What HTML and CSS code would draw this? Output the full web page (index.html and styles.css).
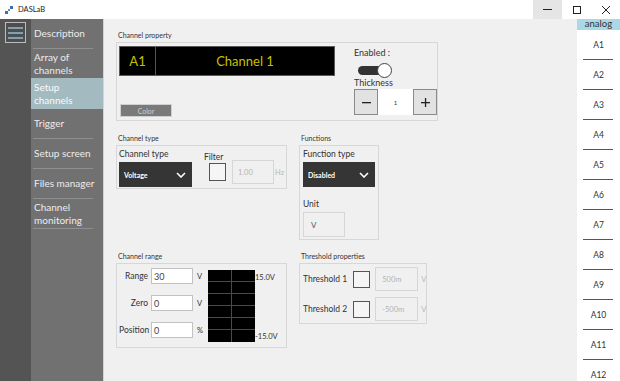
FILE: index.html
```html
<!DOCTYPE html>
<html>
<head>
<meta charset="utf-8">
<title>DASLaB</title>
<link rel="stylesheet" href="styles.css">
</head>
<body>
<div class="window">
  <header class="titlebar">
    <svg class="app-icon" width="8" height="8" viewBox="0 0 8 8">
      <rect x="0" y="5" width="3" height="3" fill="#3a6fb0"/>
      <rect x="3" y="3" width="2" height="2" fill="#7a8a9a"/>
      <rect x="5" y="0" width="3" height="3" fill="#3a6fb0"/>
    </svg>
    <span class="title">DASLaB</span>
    <div class="controls">
      <div class="ctl ctl-hover"><svg width="9" height="1"><rect width="9" height="1" fill="#222"/></svg></div>
      <div class="ctl"><svg width="8" height="8"><rect x=".5" y=".5" width="7" height="7" fill="none" stroke="#222"/></svg></div>
      <div class="ctl"><svg width="8" height="8"><path d="M0 0L8 8M8 0L0 8" stroke="#222" stroke-width="1"/></svg></div>
    </div>
  </header>

  <div class="body">
    <div class="rail">
      <div class="hamburger"><span></span><span></span><span></span></div>
    </div>

    <nav class="nav">
      <div class="nav-item">Description</div>
      <div class="sep"></div>
      <div class="nav-item">Array of<br>channels</div>
      <div class="nav-item active">Setup<br>channels</div>
      <div class="nav-item">Trigger</div>
      <div class="sep"></div>
      <div class="nav-item">Setup screen</div>
      <div class="sep"></div>
      <div class="nav-item">Files manager</div>
      <div class="sep"></div>
      <div class="nav-item">Channel<br>monitoring</div>
      <div class="sep"></div>
    </nav>

    <main class="main">
      <section class="group">
        <div class="group-label">Channel property</div>
        <div class="box box-prop">
          <div class="prop-left">
            <div class="display">
              <div class="disp-id">A1</div>
              <div class="disp-name">Channel 1</div>
            </div>
            <div class="color-btn">Color</div>
          </div>
          <div class="prop-right">
            <div class="lbl-enabled">Enabled :</div>
            <div class="toggle"><div class="knob"></div></div>
            <div class="lbl-thick">Thickness</div>
            <div class="stepper">
              <div class="step-btn">
                <svg width="9" height="9"><rect x="0" y="4" width="9" height="1.3" fill="#222"/></svg>
              </div>
              <div class="step-val">1</div>
              <div class="step-btn">
                <svg width="9" height="9"><rect x="0" y="4" width="9" height="1.3" fill="#222"/><rect x="3.9" y="0" width="1.3" height="9" fill="#222"/></svg>
              </div>
            </div>
          </div>
        </div>
      </section>

      <div class="row row2">
        <section class="group">
          <div class="group-label">Channel type</div>
          <div class="box box-type">
            <div class="col">
              <div class="field-lbl">Channel type</div>
              <div class="select">
                <span>Voltage</span>
                <svg width="10" height="6" viewBox="0 0 10 6"><path d="M1 1L5 5L9 1" fill="none" stroke="#fff" stroke-width="1.6"/></svg>
              </div>
            </div>
            <div class="col filter-col">
              <div class="field-lbl filter-lbl">Filter</div>
              <div class="filter-row">
                <div class="check"></div>
                <div class="input disabled filter-in">1.00</div>
                <span class="unit-dim">Hz</span>
              </div>
            </div>
          </div>
        </section>

        <section class="group">
          <div class="group-label">Functions</div>
          <div class="box box-func">
            <div class="field-lbl">Function type</div>
            <div class="select select-func">
              <span>Disabled</span>
              <svg width="10" height="6" viewBox="0 0 10 6"><path d="M1 1L5 5L9 1" fill="none" stroke="#fff" stroke-width="1.6"/></svg>
            </div>
            <div class="field-lbl unit-lbl">Unit</div>
            <div class="input disabled unit-in">V</div>
          </div>
        </section>
      </div>

      <div class="row row3">
        <section class="group">
          <div class="group-label">Channel range</div>
          <div class="box box-range">
            <div class="range-form">
              <span class="r-lbl">Range</span><div class="input r-in">30</div><span class="r-unit">V</span>
              <span class="r-lbl">Zero</span><div class="input r-in">0</div><span class="r-unit">V</span>
              <span class="r-lbl">Position</span><div class="input r-in">0</div><span class="r-unit">%</span>
            </div>
            <div class="chart">
              <div class="cell"></div><div class="cell"></div>
              <div class="cell"></div><div class="cell"></div>
              <div class="cell"></div><div class="cell"></div>
              <div class="cell"></div><div class="cell"></div>
              <div class="cell"></div><div class="cell"></div>
              <div class="cell"></div><div class="cell"></div>
            </div>
            <div class="chart-scale">
              <span>15.0V</span>
              <span>-15.0V</span>
            </div>
          </div>
        </section>

        <section class="group">
          <div class="group-label">Threshold properties</div>
          <div class="box box-thr">
            <div class="thr-row">
              <span class="thr-lbl">Threshold 1</span>
              <div class="check"></div>
              <div class="input disabled thr-in">500m</div>
              <span class="unit-dim">V</span>
            </div>
            <div class="thr-row">
              <span class="thr-lbl">Threshold 2</span>
              <div class="check"></div>
              <div class="input disabled thr-in">-500m</div>
              <span class="unit-dim">V</span>
            </div>
          </div>
        </section>
      </div>
    </main>

    <aside class="list">
      <div class="list-head">analog</div>
      <div class="list-item">A1</div><div class="list-sep"></div>
      <div class="list-item">A2</div><div class="list-sep"></div>
      <div class="list-item">A3</div><div class="list-sep"></div>
      <div class="list-item">A4</div><div class="list-sep"></div>
      <div class="list-item">A5</div><div class="list-sep"></div>
      <div class="list-item">A6</div><div class="list-sep"></div>
      <div class="list-item">A7</div><div class="list-sep"></div>
      <div class="list-item">A8</div><div class="list-sep"></div>
      <div class="list-item">A9</div><div class="list-sep"></div>
      <div class="list-item">A10</div><div class="list-sep"></div>
      <div class="list-item">A11</div><div class="list-sep"></div>
      <div class="list-item">A12</div><div class="list-sep"></div>
    </aside>
  </div>
</div>
</body>
</html>
```

FILE: styles.css
```css
* { box-sizing: border-box; }

body {
  margin: 0;
  width: 620px;
  height: 381px;
  overflow: hidden;
  font-family: Lato, "Open Sans", sans-serif;
  color: #333;
}

.window {
  display: flex;
  flex-direction: column;
  height: 381px;
}

/* title bar */
.titlebar {
  height: 19px;
  flex: none;
  background: #fff;
  display: flex;
  align-items: center;
}
.app-icon { margin-left: 5px; }
.title {
  margin-left: 5px;
  font-size: 7.5px;
  color: #222;
}
.controls {
  margin-left: auto;
  display: flex;
  height: 19px;
}
.ctl {
  width: 29px;
  display: flex;
  align-items: center;
  justify-content: center;
}
.ctl-hover { background: #e5e5e5; }

/* body */
.body {
  flex: 1;
  display: flex;
  min-height: 0;
}

.rail {
  width: 31px;
  flex: none;
  background: #545454;
}
.hamburger {
  margin: 3px 0 0 5px;
  width: 21px;
  height: 21px;
  border: 1px solid #bcbcbc;
  background: #4e4e4e;
  display: flex;
  flex-direction: column;
  justify-content: center;
  gap: 3px;
  padding: 0 2px;
}
.hamburger span {
  height: 2px;
  background: #7fa2b3;
}

.nav {
  width: 73px;
  flex: none;
  background: #717171;
  border-right: 1px solid #d4d4d4;
}
.nav-item {
  height: 29px;
  display: flex;
  align-items: center;
  padding-left: 3px;
  font-size: 10px;
  line-height: 13px;
  color: #ececec;
  white-space: nowrap;
}
.nav-item.active {
  height: 31px;
  background: #a3bbc0;
  color: #fafafa;
}
.sep {
  height: 1px;
  margin: 0 10px 0 2px;
  background: #8f8f8f;
}

/* main */
.main {
  flex: 1;
  background: #f0f0f0;
  padding: 12px 0 0 12px;
}
.group-label {
  font-size: 7px;
  line-height: 9px;
  margin: 0 0 2px 2px;
  color: #333;
  white-space: nowrap;
}
.box {
  border: 1px solid #d7d7d7;
}
.row {
  display: flex;
  align-items: flex-start;
  gap: 12px;
}
.row2 { margin-top: 13px; }
.row3 { margin-top: 12px; }

/* channel property */
.box-prop {
  width: 322px;
  height: 79px;
  display: flex;
  padding: 3px 0 0 2px;
}
.prop-left {
  width: 216px;
  display: flex;
  flex-direction: column;
}
.display {
  height: 30px;
  display: flex;
  background: #000;
  border: 1px solid #5a5a5a;
  color: #c8c000;
  font-size: 13px;
}
.disp-id {
  width: 36px;
  border-right: 1px solid #555;
  display: flex;
  align-items: center;
  justify-content: center;
}
.disp-name {
  flex: 1;
  display: flex;
  align-items: center;
  justify-content: center;
}
.color-btn {
  margin: 28px 0 0 1px;
  width: 52px;
  height: 13px;
  background: #7a7a7a;
  border: 1px solid #d0d0d0;
  color: #cfcfcf;
  font-size: 7px;
  display: flex;
  align-items: center;
  justify-content: center;
}
.prop-right {
  margin-left: 19px;
  width: 83px;
  display: flex;
  flex-direction: column;
}
.lbl-enabled {
  margin-top: 2px;
  font-size: 9px;
  line-height: 10px;
  color: #333;
}
.toggle {
  position: relative;
  margin: 8px 0 0 4px;
  width: 29px;
  height: 9px;
  border-radius: 5px;
  background: #333;
}
.knob {
  position: absolute;
  left: 19px;
  top: -3.5px;
  width: 15px;
  height: 15px;
  border-radius: 50%;
  background: #fff;
  border: 1px solid #444;
}
.lbl-thick {
  margin-top: 3px;
  font-size: 9px;
  line-height: 10px;
  color: #333;
}
.stepper {
  margin-top: 1px;
  height: 26px;
  display: flex;
}
.step-btn {
  width: 24px;
  background: #e2e2e2;
  border: 1px solid #8a8a8a;
  display: flex;
  align-items: center;
  justify-content: center;
}
.step-val {
  flex: 1;
  background: #fff;
  font-size: 6px;
  display: flex;
  align-items: center;
  justify-content: center;
  color: #333;
}

/* channel type */
.box-type {
  width: 171px;
  height: 44px;
  display: flex;
  padding: 3px 0 0 2px;
}
.col {
  display: flex;
  flex-direction: column;
}
.field-lbl {
  font-size: 8.5px;
  line-height: 10px;
  color: #333;
  white-space: nowrap;
}
.select {
  margin-top: 3px;
  width: 73px;
  height: 25px;
  background: #353535;
  display: flex;
  align-items: center;
  justify-content: space-between;
  padding: 0 6px 0 5px;
  color: #fff;
  font-size: 7px;
  font-weight: 700;
}
.filter-col {
  margin-left: 12px;
}
.filter-lbl {
  margin-top: 4px;
  line-height: 8px;
}
.filter-row {
  display: flex;
  align-items: center;
  margin-top: -1px;
}
.check {
  width: 17px;
  height: 18px;
  background: #f5f5f5;
  border: 1px solid #555;
  flex: none;
}
.filter-row .check { margin-left: 5px; }
.input {
  height: 16px;
  background: #fff;
  border: 1px solid #c2c2c2;
  display: flex;
  align-items: center;
  font-size: 8.5px;
  color: #333;
  flex: none;
}
.input.disabled {
  background: #f0f0f0;
  border-color: #d6d6d6;
  color: #b3b3b3;
}
.filter-in {
  margin-left: 6px;
  width: 42px;
  height: 24px;
  padding-left: 5px;
  font-size: 7.5px;
}
.unit-dim {
  margin-left: 1px;
  font-size: 7.5px;
  color: #b8b8b8;
}

/* functions */
.box-func {
  width: 80px;
  height: 95px;
  padding: 3px 0 0 3px;
  display: flex;
  flex-direction: column;
}
.select-func { width: 72px; }
.unit-lbl { margin-top: 12px; }
.input.unit-in {
  margin-top: 3px;
  width: 42px;
  height: 25px;
  padding-left: 7px;
  color: #555;
  font-size: 8px;
}

/* channel range */
.box-range {
  width: 171px;
  height: 85px;
  display: flex;
  align-items: flex-start;
  padding: 4px 0 0 2px;
}
.range-form {
  display: grid;
  grid-template-columns: 29px 42px 10px;
  grid-auto-rows: 16px;
  column-gap: 3px;
  row-gap: 11px;
  align-items: center;
}
.r-lbl {
  text-align: right;
  font-size: 8.5px;
  color: #333;
}
.r-in {
  padding-left: 2px;
  font-size: 9px;
  color: #444;
}
.r-unit {
  padding-left: 1px;
  font-size: 7.5px;
  color: #333;
}
.chart {
  margin: 2px 0 0 2px;
  width: 47px;
  height: 72px;
  background: #000;
  display: grid;
  grid-template-columns: 1fr 1fr;
  grid-template-rows: repeat(6, 1fr);
}
.cell {
  border-bottom: 1px solid #4a4a4a;
}
.cell:nth-child(odd) { border-right: 1px solid #4a4a4a; }
.cell:nth-last-child(-n+2) { border-bottom: none; }
.chart-scale {
  margin-top: 2px;
  height: 72px;
  display: flex;
  flex-direction: column;
  justify-content: space-between;
  padding: 3px 0 1px;
  font-size: 7.5px;
  color: #333;
}

/* threshold */
.box-thr {
  width: 128px;
  height: 61px;
  padding: 3px 0 0 3px;
  display: flex;
  flex-direction: column;
  gap: 6px;
}
.thr-row {
  display: flex;
  align-items: center;
}
.thr-lbl {
  font-size: 8.5px;
  color: #333;
  white-space: nowrap;
  flex: none;
}
.thr-row .check {
  margin-left: 6px;
  height: 17px;
}
.thr-in {
  margin-left: 5px;
  width: 43px;
  height: 24px;
  padding-left: 6px;
  font-size: 7.5px;
}
.thr-row .unit-dim { margin-left: 3px; }

/* right list */
.list {
  width: 43px;
  flex: none;
  background: #fff;
  overflow: hidden;
}
.list-head {
  height: 11px;
  background: #aad8e8;
  font-size: 9.5px;
  line-height: 10px;
  text-align: center;
  color: #333;
}
.list-item {
  height: 29px;
  display: flex;
  align-items: center;
  justify-content: center;
  font-size: 8.5px;
  color: #333;
}
.list-sep {
  height: 1px;
  margin: 0 7px 0 6px;
  background: #555;
}
```
